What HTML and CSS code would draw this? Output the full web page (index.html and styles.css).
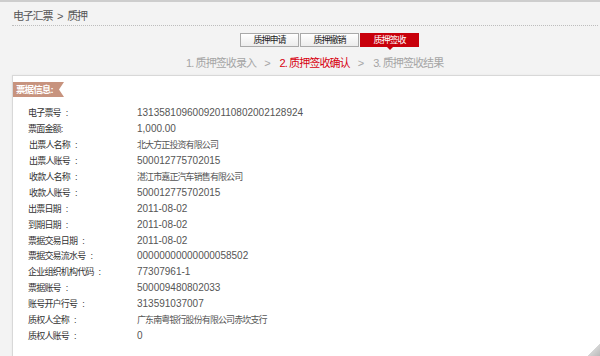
FILE: index.html
```html
<!DOCTYPE html>
<html lang="zh">
<head>
<meta charset="utf-8">
<link rel="stylesheet" href="styles.css">
</head>
<body>
<div class="page">
  <div class="crumb">电子汇票 &gt; 质押</div>
  <div class="tabs">
    <span class="tab">质押申请</span>
    <span class="tab">质押撤销</span>
    <span class="tab active">质押签收</span>
  </div>
  <div class="steps">
    <span class="step">1. 质押签收录入</span>
    <span class="sep">&gt;</span>
    <span class="step current">2. 质押签收确认</span>
    <span class="sep">&gt;</span>
    <span class="step">3. 质押签收结果</span>
  </div>
  <div class="panel">
    <div class="tag">票据信息:</div>
    <div class="rows">
      <div class="row"><span class="label">电子票号<i class="colon">:</i></span><span class="value">131358109600920110802002128924</span></div>
      <div class="row"><span class="label">票面金额:</span><span class="value">1,000.00</span></div>
      <div class="row"><span class="label ind">出票人名称<i class="colon">:</i></span><span class="value cn">北大方正投资有限公司</span></div>
      <div class="row"><span class="label ind">出票人账号<i class="colon">:</i></span><span class="value">500012775702015</span></div>
      <div class="row"><span class="label ind">收款人名称<i class="colon">:</i></span><span class="value cn">湛江市嘉正汽车销售有限公司</span></div>
      <div class="row"><span class="label ind">收款人账号<i class="colon">:</i></span><span class="value">500012775702015</span></div>
      <div class="row"><span class="label">出票日期<i class="colon">:</i></span><span class="value">2011-08-02</span></div>
      <div class="row"><span class="label">到期日期<i class="colon">:</i></span><span class="value">2011-08-02</span></div>
      <div class="row"><span class="label">票据交易日期<i class="colon">:</i></span><span class="value">2011-08-02</span></div>
      <div class="row"><span class="label">票据交易流水号<i class="colon">:</i></span><span class="value">00000000000000058502</span></div>
      <div class="row"><span class="label">企业组织机构代码<i class="colon">:</i></span><span class="value">77307961-1</span></div>
      <div class="row"><span class="label">票据账号<i class="colon">:</i></span><span class="value">500009480802033</span></div>
      <div class="row"><span class="label">账号开户行号<i class="colon">:</i></span><span class="value">313591037007</span></div>
      <div class="row"><span class="label">质权人全称<i class="colon">:</i></span><span class="value cn">广东南粤银行股份有限公司赤坎支行</span></div>
      <div class="row"><span class="label">质权人账号<i class="colon">:</i></span><span class="value">0</span></div>
    </div>
  </div>
</div>
<div class="curl"></div>
</body>
</html>
```
FILE: styles.css
```css
html, body {
  margin: 0;
  padding: 0;
  overflow: hidden;
  height: 356px;
}
body {
  background: #f3f3f3;
  border-top: 2px solid #cdcdcd;
  font-family: "Liberation Sans", "Noto Sans CJK SC", sans-serif;
  color: #555;
}
.page {
  padding-left: 12px;
}
.crumb {
  padding-top: 6px;
  padding-left: 1px;
  height: 17px;
  line-height: 17px;
  font-size: 11px;
  letter-spacing: -1.2px;
  word-spacing: 3px;
  color: #555;
  border-bottom: 1px dotted #bdbdbd;
  margin-right: 2px;
}
.tabs {
  display: flex;
  padding-left: 228px;
  margin-top: 7px;
  height: 14px;
}
.tab {
  width: 57px;
  height: 12px;
  margin-right: 1px;
  border: 1px solid #a9a9a9;
  background: linear-gradient(#ffffff, #ececec);
  font-size: 9px;
  line-height: 12px;
  letter-spacing: -1px;
  text-align: center;
  color: #222;
  position: relative;
}
.tab.active {
  background: #c8000b;
  border-color: #c8000b;
  color: #fff;
}
.tab.active::after {
  content: "";
  position: absolute;
  left: 50%;
  bottom: -4px;
  margin-left: -3px;
  border-left: 3px solid transparent;
  border-right: 3px solid transparent;
  border-top: 3px solid #c8000b;
}
.steps {
  display: flex;
  padding-left: 174px;
  margin-top: 8px;
  height: 16px;
  line-height: 16px;
  font-size: 11px;
  color: #a5a5a5;
}
.step {
  letter-spacing: -0.9px;
}
.step.current {
  color: #d7000f;
}
.sep {
  margin: 0 9px 0 8px;
}
.panel {
  margin-top: 4px;
  margin-right: -4px;
  height: 320px;
  background: #fff;
  border: 1px solid #d8d8d8;
  box-shadow: 0 0 2px rgba(0, 0, 0, 0.06);
}
.tag {
  margin-top: 6px;
  width: 51px;
  height: 15px;
  line-height: 15px;
  padding-left: 3px;
  box-sizing: border-box;
  background: #c7937e;
  color: #fff;
  font-weight: bold;
  font-size: 9.5px;
  letter-spacing: -0.9px;
  clip-path: polygon(0 0, 100% 0, calc(100% - 5px) 50%, 100% 100%, 0 100%);
}
.rows {
  margin-top: 8px;
  padding-left: 15px;
}
.row {
  display: flex;
  height: 15.95px;
  line-height: 16px;
  font-size: 10px;
}
.label {
  width: 109px;
  flex: none;
  color: #333;
  font-size: 9px;
  letter-spacing: -0.8px;
}
.label.ind {
  padding-left: 1px;
  width: 108px;
}
.colon {
  font-style: normal;
  margin-left: 5px;
}
.value {
  color: #555;
}
.value.cn {
  font-size: 9px;
  letter-spacing: -0.9px;
}
.curl {
  position: fixed;
  right: 0;
  bottom: 0;
  width: 13px;
  height: 13px;
  background: linear-gradient(135deg, transparent 50%, #d6d6d6 52%, #b9b9b9 100%);
}
```
